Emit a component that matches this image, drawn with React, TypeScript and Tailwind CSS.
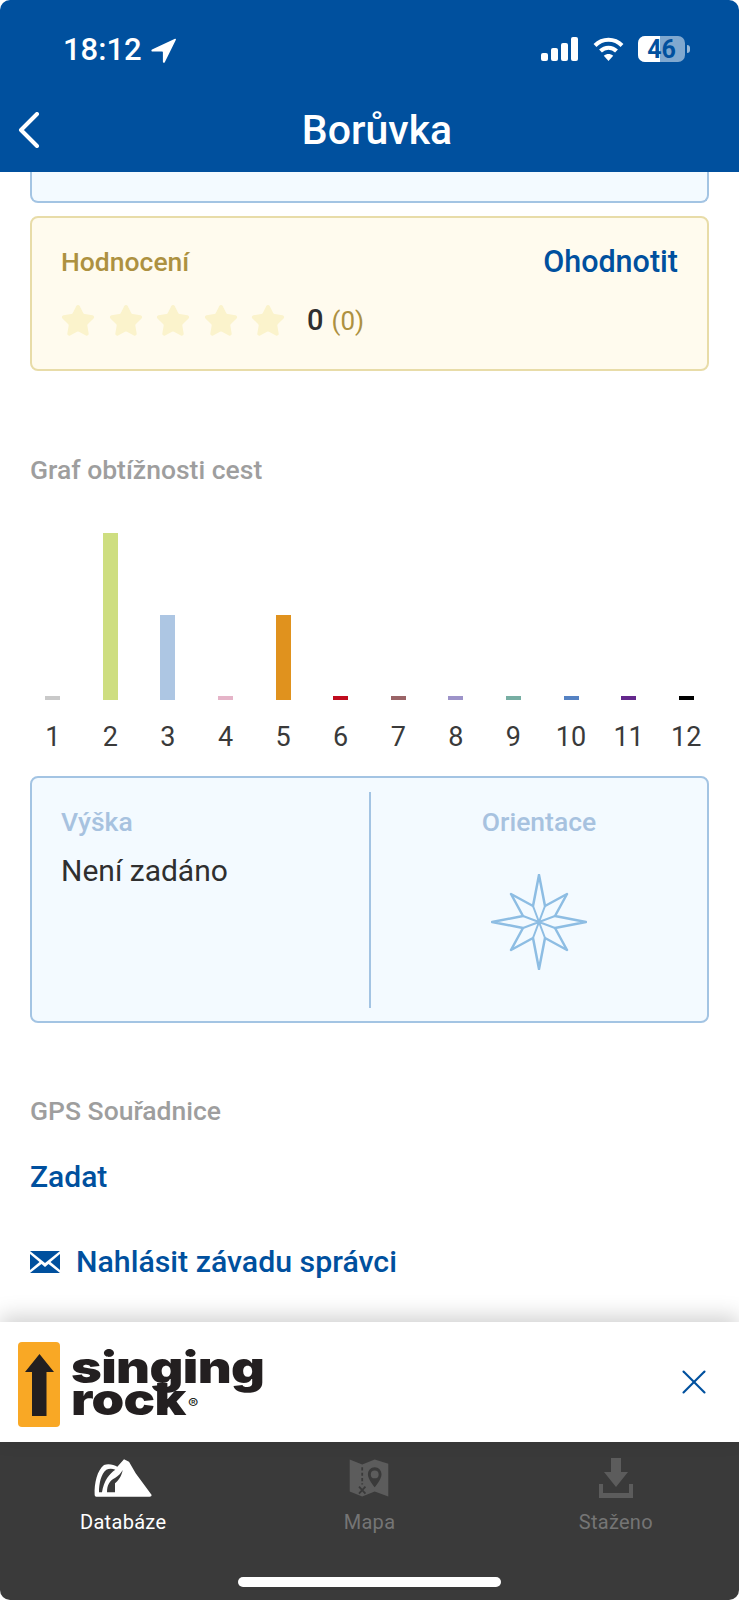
import { Star, X } from 'lucide-react';

const font = { fontFamily: 'Roboto, "Noto Sans", sans-serif' };

const bars = [
  { label: '1', height: 'h-1', color: 'bg-[#c9c9c9]' },
  { label: '2', height: 'h-[167px]', color: 'bg-[#cede80]' },
  { label: '3', height: 'h-[85px]', color: 'bg-[#adc6e3]' },
  { label: '4', height: 'h-1', color: 'bg-[#e5b4c8]' },
  { label: '5', height: 'h-[85px]', color: 'bg-[#e0921e]' },
  { label: '6', height: 'h-1', color: 'bg-[#c00b1e]' },
  { label: '7', height: 'h-1', color: 'bg-[#9a6467]' },
  { label: '8', height: 'h-1', color: 'bg-[#9d93c9]' },
  { label: '9', height: 'h-1', color: 'bg-[#77aea3]' },
  { label: '10', height: 'h-1', color: 'bg-[#5582c3]' },
  { label: '11', height: 'h-1', color: 'bg-[#64288c]' },
  { label: '12', height: 'h-1', color: 'bg-black' },
];

function StatusBar() {
  return (
    <div className="flex h-[100px] items-start justify-between pl-[63px] pr-[49px] pt-[35px] text-white">
      <div className="flex items-center gap-[9px]">
        <span className="text-[31px] font-medium leading-[30px]">18:12</span>
        <svg viewBox="0 0 25 25" className="h-[25px] w-[25px]" fill="currentColor">
          <path d="M24 .8 1 11.6c-1 .5-.7 1.9.4 1.9h9.8c.4 0 .7.3.7.7v9.600c0 1.100 1.400 1.400 1.900.5L24.900 1.700c.3-.6-.3-1.200-.9-.9Z" />
        </svg>
      </div>
      <div className="flex items-center pt-px">
        <svg viewBox="0 0 37 24" className="mr-[15px] h-6 w-[37px]" fill="currentColor">
          <rect x="0" y="16" width="7" height="8" rx="2" />
          <rect x="10" y="11" width="7" height="13" rx="2" />
          <rect x="20" y="6" width="7" height="18" rx="2" />
          <rect x="30" y="0" width="7" height="24" rx="2" />
        </svg>
        <svg viewBox="0 0 31 24" className="mr-[14px] h-6 w-[31px]" fill="none" stroke="currentColor" strokeWidth="4">
          <path d="M2 8.500C9.500 .8 21.500 .8 29 8.500" />
          <path d="M7.500 14c4.500-4.500 11.500-4.500 16 0" />
          <path d="M15.500 24 10.800 18.800c2.700-2.300 6.700-2.300 9.400 0Z" fill="currentColor" stroke="none" />
        </svg>
        <div className="relative h-[26px] w-[47px] overflow-hidden rounded-[7px] bg-white/50">
          <div className="h-full w-[22px] bg-white" />
          <span className="absolute inset-0 flex items-center justify-center text-[25px] font-bold leading-none text-[#00509e]">46</span>
        </div>
        <div className="ml-0.5 h-2 w-[3px] rounded-r-full bg-white/60" />
      </div>
    </div>
  );
}

function RatingCard() {
  return (
    <div className="mt-[13px] h-[155px] rounded-lg border-2 border-[#e8dca8] bg-[#fffbee] px-[29px] pt-[28px]">
      <div className="flex items-center justify-between">
        <span className="text-[26.5px] font-medium leading-[32px] text-[#ad9140]">Hodnocení</span>
        <span className="text-[30.5px] font-medium leading-[32px] text-[#00509e]">Ohodnotit</span>
      </div>
      <div className="-ml-px mt-[24px] flex h-[38px] items-center">
        <div className="flex gap-[11.5px]">
          {[0, 1, 2, 3, 4].map((i) => (
            <Star key={i} className="h-9 w-9 fill-[#fbf3cc] text-[#fbf3cc]" strokeWidth={1.5} />
          ))}
        </div>
        <span className="ml-[21px] text-[29px] font-medium text-[#2f2f2f]">0</span>
        <span className="ml-2 text-[26px] text-[#ad9140]">(0)</span>
      </div>
    </div>
  );
}

function Chart() {
  return (
    <div className="-mx-[6px] mt-[47px] grid grid-cols-12">
      {bars.map((bar) => (
        <div key={bar.label} className="flex flex-col items-center">
          <div className="flex h-[167px] items-end">
            <div className={`w-[15px] ${bar.height} ${bar.color}`} />
          </div>
          <span className="mt-[21px] text-[27px] leading-[32px] text-[#3a3a3a]">{bar.label}</span>
        </div>
      ))}
    </div>
  );
}

function CompassRose() {
  const points = '47,0 53,31 75,19 63,41 94,47 63,53 75,75 53,63 47,94 41,63 19,75 31,53 0,47 31,41 19,19 41,31';
  return (
    <svg viewBox="-1 -1 96 96" className="h-24 w-24" fill="none" stroke="#8dbde3" strokeWidth="2.5" strokeLinejoin="round">
      <polygon points={points} />
      <path d="M41 31 53 63M53 31 41 63M31 41 63 53M63 41 31 53" strokeWidth="2" />
    </svg>
  );
}

function InfoCard() {
  return (
    <div className="mt-[23px] flex h-[247px] items-center rounded-lg border-2 border-[#a3c4e3] bg-[#f3faff]">
      <div className="h-full w-[337px] pl-[29px] pt-[28px]">
        <div className="text-[26.5px] font-medium leading-[32px] text-[#a7c2df]">Výška</div>
        <div className="mt-[17px] text-[30px] leading-[32px] text-[#2f2f2f]">Není zadáno</div>
      </div>
      <div className="h-[216px] w-0.5 bg-[#a3c4e3]" />
      <div className="flex h-full flex-1 flex-col items-center pt-[28px]">
        <div className="text-[26.5px] font-medium leading-[32px] text-[#a7c2df]">Orientace</div>
        <div className="mt-[36px]">
          <CompassRose />
        </div>
      </div>
    </div>
  );
}

function SingingRockLogo() {
  return (
    <div className="flex items-center pt-[5px]">
      <div className="flex h-[85px] w-[42px] items-center justify-center rounded-sm bg-[#f9a825]">
        <svg viewBox="0 0 29 62" className="h-[62px] w-[29px]" fill="#231f20">
          <path d="M14.500 0 29 18H21.500V62H7V18H0Z" />
        </svg>
      </div>
      <div className="-mt-[3px] ml-[11px] origin-left scale-x-[1.19] font-['Inter'] font-black text-[#231f20]">
        <div className="h-8 text-[44px] leading-8 tracking-[-0.5px]">singing</div>
        <div className="flex h-8 items-center text-[44px] leading-8 tracking-[-0.5px]">
          rock
          <span className="ml-[2px] mt-2 text-[13px] font-normal leading-none tracking-normal">®</span>
        </div>
      </div>
    </div>
  );
}

function TabIcon({ kind }: { kind: 'mountain' | 'map' | 'download' }) {
  if (kind === 'mountain') {
    return (
      <svg viewBox="42 24 180 120" className="h-10 w-[60px]">
        <path fill="#fff" d="M47 135C45 100 55 60 75 45 90 40 105 45 115 50L135 28 150 35 170 70 218 135Q218 140 212 140H52Q47 140 47 135Z" />
        <path fill="#3a3a3a" d="M60 127C60 100 66 72 82 59 90 55 100 55 109 59 92 70 74 92 69 127Z" />
        <path fill="#3a3a3a" d="M84 127C84 105 92 92 108 84 118 78 126 70 131 60 128 78 118 92 108 100V127Z" />
      </svg>
    );
  }
  if (kind === 'map') {
    return (
      <svg viewBox="28 24 112 112" className="h-10 w-10" fill="#5c5c5c">
        <path d="M30 28 65 42 100 28 138 40V132L100 118 65 132 30 118Z" />
        <path fill="#3a3a3a" d="M100 50c-11 0-19 9-19 20 0 14 19 36 19 36s19-22 19-36c0-11-8-20-19-20Zm0 9a11 11 0 1 1 0 22 11 11 0 0 1 0-22Z" />
        <path fill="none" stroke="#3a3a3a" strokeWidth="5" strokeDasharray="9 6" d="M65 50V98" />
        <path fill="none" stroke="#3a3a3a" strokeWidth="5" d="M56 104l18 20M74 104l-18 20" />
      </svg>
    );
  }
  return (
    <svg viewBox="0 0 34 40" className="h-10 w-[34px]" fill="#5c5c5c">
      <path d="M12 0h10v14h7L17 29 5 14h7Z" />
      <path d="M0 26h4v9h26v-9h4v14H0Z" />
    </svg>
  );
}

const tabs = [
  { label: 'Databáze', kind: 'mountain' as const, color: 'text-white' },
  { label: 'Mapa', kind: 'map' as const, color: 'text-[#757575]' },
  { label: 'Staženo', kind: 'download' as const, color: 'text-[#757575]' },
];

export default function App() {
  return (
    <div className="flex h-[1600px] w-[739px] flex-col overflow-hidden bg-white" style={font}>
      <header className="h-[172px] shrink-0 rounded-t-[10px] bg-[#00509e]">
        <StatusBar />
        <div className="relative flex h-[60px] items-center justify-center pl-[15px]">
          <svg viewBox="0 0 22 36" className="absolute left-[18px] top-[12px] h-9 w-[22px]" fill="none" stroke="#fff" strokeWidth="4" strokeLinecap="round" strokeLinejoin="round">
            <path d="M19 2 3 18l16 16" />
          </svg>
          <h1 className="mt-0.5 text-[41px] font-medium text-white">Borůvka</h1>
        </div>
      </header>

      <main className="flex-1 px-[30px]">
        <div className="h-[31px] rounded-b-lg border-x-2 border-b-2 border-[#a3c4e3] bg-[#f3faff]" />
        <RatingCard />

        <div className="mt-[83px] text-[26.5px] font-medium leading-[32px] text-[#9e9e9e]">Graf obtížnosti cest</div>
        <Chart />
        <InfoCard />

        <div className="mt-[72px] text-[26.5px] font-medium leading-[32px] text-[#9e9e9e]">GPS Souřadnice</div>
        <div className="mt-[34px] text-[30px] font-medium leading-[32px] text-[#00509e]">Zadat</div>
        <div className="mt-[53px] flex items-center gap-[16px]">
          <svg viewBox="0 0 30 22" className="h-[22px] w-[30px]" fill="#00509e">
            <path d="M0 0h30L15 12Z" />
            <path d="M0 3v16l9.500-8ZM30 3v16l-9.500-8Z" />
            <path d="M0 22h30L18.500 13 15 16l-3.500-3Z" />
          </svg>
          <span className="text-[30.3px] font-medium leading-[32px] text-[#00509e]">Nahlásit závadu správci</span>
        </div>
      </main>

      <div className="relative flex h-[120px] shrink-0 items-center justify-between bg-white pl-[18px] pr-[24px] shadow-[0_-6px_20px_rgba(0,0,0,0.18)]">
        <SingingRockLogo />
        <X className="h-[42px] w-[42px] text-[#00509e]" strokeWidth={1.2} />
      </div>

      <nav className="h-[158px] shrink-0 rounded-b-[10px] bg-[#3a3a3a]">
        <div className="grid grid-cols-3 pt-4">
          {tabs.map((tab) => (
            <div key={tab.label} className="flex flex-col items-center">
              <TabIcon kind={tab.kind} />
              <span className={`mt-[12px] text-[20px] leading-[24px] tracking-[0.3px] ${tab.color}`}>{tab.label}</span>
            </div>
          ))}
        </div>
        <div className="mx-auto mt-[43px] h-[10px] w-[263px] rounded-full bg-white" />
      </nav>
    </div>
  );
}
